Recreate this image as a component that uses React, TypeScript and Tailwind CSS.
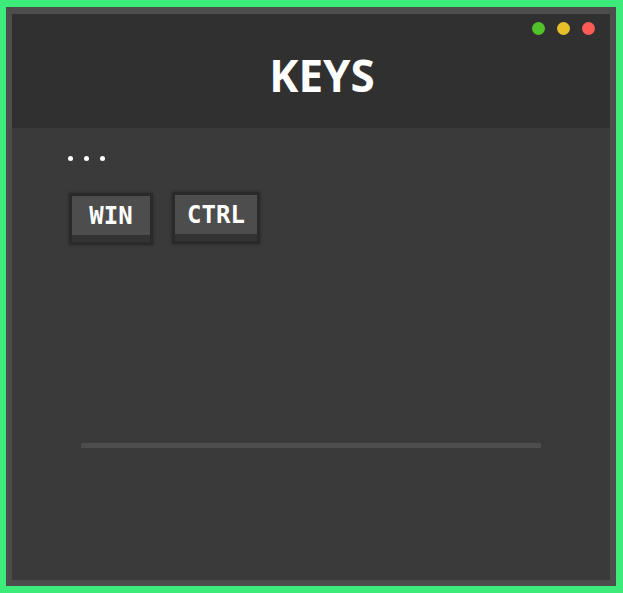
import React from "react";

const mono = { fontFamily: '"DejaVu Sans Mono", "Liberation Mono", monospace' };
const sans = { fontFamily: '"Open Sans", "Noto Sans", sans-serif' };

function Key({ label, face, extra }: { label: string; face: string; extra?: string }) {
  return (
    <div className={`border-[3px] border-[#2a2a2a] bg-[#2a2a2a] shadow-[0_0_3px_rgba(0,0,0,0.35)] ${extra ?? ""}`}>
      <div className={`${face} h-[39px] bg-[#4d4d4d] flex items-center justify-center text-white text-[24px] font-bold leading-none`}>
        {label}
      </div>
      <div className="h-[7px] bg-[#333333]" />
    </div>
  );
}

export default function App() {
  return (
    <div className="w-[623px] h-[593px] bg-[#3deb7a] pl-[6px] pt-[7px]" style={mono}>
      <div className="w-[610px] h-[579px] border-[6px] border-t-[7px] border-[#4d4d4d] bg-[#3a3a3a] flex flex-col">
        <div className="h-[114px] bg-[#303030] flex flex-col">
          <div className="flex justify-end gap-3 pt-2 pr-[15px]">
            <div className="w-[13px] h-[13px] rounded-full bg-[#52c22b]" />
            <div className="w-[13px] h-[13px] rounded-full bg-[#e6c029]" />
            <div className="w-[13px] h-[13px] rounded-full bg-[#fe5b55]" />
          </div>
          <div className="mt-[18px] pl-[22px] text-center text-white text-[44px] font-bold leading-none" style={sans}>
            KEYS
          </div>
        </div>
        <div className="flex flex-col pl-[56px] pt-[28px]">
          <div className="flex gap-[11px]">
            <div className="w-[5px] h-[5px] rounded-full bg-white" />
            <div className="w-[5px] h-[5px] rounded-full bg-white" />
            <div className="w-[5px] h-[5px] rounded-full bg-white" />
          </div>
          <div className="flex items-start gap-[19px] ml-px mt-[31px]">
            <Key label="WIN" face="w-[78px]" extra="mt-px" />
            <Key label="CTRL" face="w-[82px]" />
          </div>
          <div className="ml-[13px] mt-[198px] w-[460px] h-[5px] bg-[#4d4d4d]" />
        </div>
      </div>
    </div>
  );
}
